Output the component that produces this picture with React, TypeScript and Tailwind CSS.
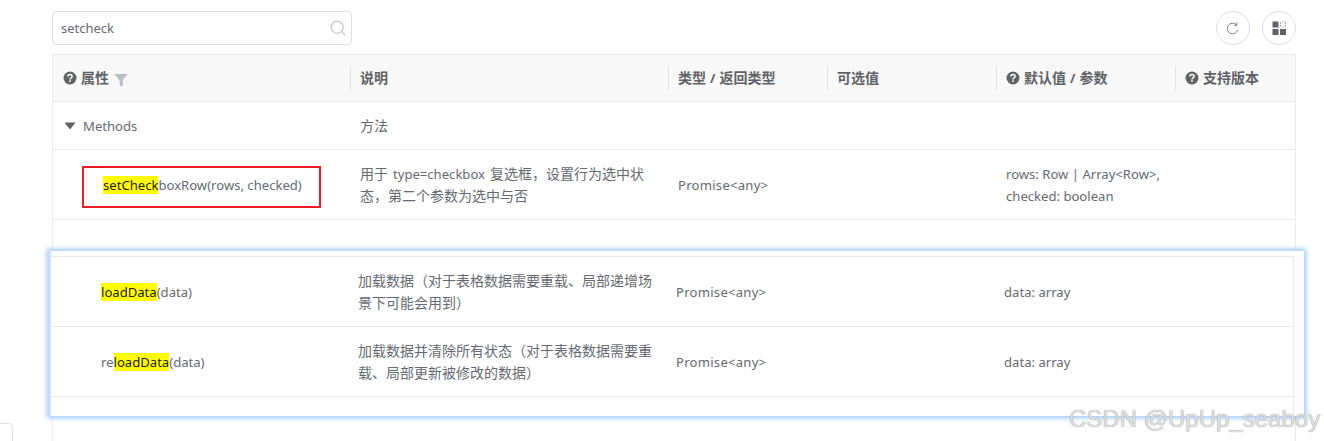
const font = { fontFamily: '"Noto Sans", "Noto Sans CJK SC", sans-serif' };

function Q() {
  return (
    <svg width="14" height="14" viewBox="0 0 14 14" className="shrink-0">
      <circle cx="7" cy="7" r="6.5" fill="#606266" />
      <path d="M4.9 5.5C4.9 4.3 5.8 3.5 7 3.5S9.1 4.3 9.1 5.4C9.1 6.9 7 6.9 7 8.4" fill="none" stroke="#fff" strokeWidth="1.5" />
      <rect x="6.2" y="9.3" width="1.6" height="1.6" fill="#fff" />
    </svg>
  );
}

const cols = "grid grid-cols-[298px_318px_159px_169px_179px_121px]";

function Zh({ children }: { children: React.ReactNode }) {
  return <span className="text-[14px]">{children}</span>;
}

function Head({ children }: { children: React.ReactNode }) {
  return (
    <div className="relative flex items-center gap-1 pl-[9px]">
      <span className="absolute left-[-1px] top-[11px] h-6 w-px bg-[#dfe1e6]" />
      {children}
    </div>
  );
}

function Hl({ children }: { children: React.ReactNode }) {
  return <span className="bg-[#ffff00] text-[#222]">{children}</span>;
}

function Row({ name, desc, type, param, height, pad }: { name: React.ReactNode; desc: React.ReactNode; type?: string; param?: React.ReactNode; height: string; pad: string }) {
  return (
    <div className={`${cols} ${height} items-center border-b border-[#e8eaec] text-[13.1px] leading-[22px] text-[#666a70]`}>
      <div className={pad}>{name}</div>
      <div className="pl-[9px] pr-3">{desc}</div>
      <div className="pl-[9px] tracking-[0.25px]">{type}</div>
      <div />
      <div className="pl-[9px]">{param}</div>
      <div />
    </div>
  );
}

export default function App() {
  return (
    <div className="relative h-[441px] w-[1324px] overflow-hidden bg-white" style={font}>
      <div className="flex h-[54px] items-start justify-between pl-[52px] pr-[28px] pt-[11px]">
        <div className="flex h-[34px] w-[300px] items-center justify-between rounded border border-[#dcdfe6] pl-2 pr-[5px] text-[13px] text-[#666a70]">
          <span className="pt-[2px]">setcheck</span>
          <svg width="16" height="16" viewBox="0 0 16 16" fill="none" stroke="#c0c4cc" strokeWidth="1.2">
            <circle cx="7.2" cy="7.2" r="6" />
            <path d="M11.6 11.6L15 15" />
          </svg>
        </div>
        <div className="flex gap-[12px]">
          <div className="flex h-[34px] w-[34px] items-center justify-center rounded-full border border-[#dcdfe6]">
            <svg width="13" height="13" viewBox="0 0 13 13" fill="none" stroke="#70747a" strokeWidth="0.9" className="-ml-[2px]">
              <path d="M10.6 3A5.3 5.3 0 1 0 11.7 8" />
              <path d="M8 3.2L10.9 3.3L11 .6" />
            </svg>
          </div>
          <div className="flex h-[34px] w-[34px] items-center justify-center rounded-full border border-[#dcdfe6]">
            <svg width="14" height="14" viewBox="0 0 14 14">
              <rect x="0.5" y="0.5" width="6" height="6" fill="#606266" />
              <rect x="8.5" y="1" width="5" height="5" fill="none" stroke="#909399" strokeWidth="1" strokeDasharray="1 1" />
              <rect x="0.5" y="8" width="6" height="6" fill="#606266" />
              <rect x="8" y="8" width="6" height="6" fill="#606266" />
            </svg>
          </div>
        </div>
      </div>

      <div className="ml-[52px] h-[387px] w-[1244px] border-x border-t border-[#e8eaec]">
        <div className={`${cols} h-[47px] border-b border-[#e8eaec] bg-[#f8f8f9] text-[13px] leading-[22px] font-bold text-[#606266]`}>
          <div className="flex items-center gap-1 pl-[10px]">
            <Q />
            <Zh>属性</Zh>
            <svg width="14" height="15" viewBox="0 0 14 14" className="ml-px mt-[2px]"><path d="M0.5 1.5H13.5L8.8 7.5V13.5H6.2L5.2 7.5Z" fill="#b9bec8" /></svg>
          </div>
          <Head><Zh>说明</Zh></Head>
          <Head><span><Zh>类型</Zh><span className="mx-1">/</span><Zh>返回类型</Zh></span></Head>
          <Head><Zh>可选值</Zh></Head>
          <Head><Q /><span><Zh>默认值</Zh><span className="mx-1">/</span><Zh>参数</Zh></span></Head>
          <Head><Q /><Zh>支持版本</Zh></Head>
        </div>
        <Row
          height="h-[48px]"
          pad="flex items-center gap-[7px] pl-[11px]"
          name={<><svg width="12" height="8" viewBox="0 0 12 8"><path d="M0.5 0.5H11.5L6 7.5Z" fill="#606266" /></svg><span>Methods</span></>}
          desc={<Zh>方法</Zh>}
        />
        <Row
          height="h-[70px]"
          pad="pl-[50px]"
          name={<><Hl>setCheck</Hl>boxRow(rows, checked)</>}
          desc={<><Zh>用于</Zh><span className="mx-[5px]">type=checkbox</span><Zh>复选框，设置行为选中状</Zh><br /><Zh>态，第二个参数为选中与否</Zh></>}
          type="Promise<any>"
          param={<>rows: Row | Array&lt;Row&gt;,<br />checked: boolean</>}
        />
      </div>

      {/* red annotation */}
      <div className="absolute left-[82px] top-[166px] h-[42px] w-[239px] border-2 border-[#ed1c24]" />

      {/* pasted screenshot panel */}
      <div className="absolute left-[49px] top-[251px] h-[165px] w-[1255px] border-l-2 border-[#cfe2fb] bg-white pt-[5px] pr-[10px] shadow-[0_0_5px_2px_#9cc6fb]">
        <div className="w-[1243px] border-r border-t border-[#e8eaec]">
          <Row
            height="h-[70px]"
            pad="pl-[50px]"
            name={<><Hl>loadData</Hl>(data)</>}
            desc={<Zh>加载数据（对于表格数据需要重载、局部递增场景下可能会用到）</Zh>}
            type="Promise<any>"
            param="data: array"
          />
          <Row
            height="h-[70px]"
            pad="pl-[50px]"
            name={<>re<Hl>loadData</Hl>(data)</>}
            desc={<Zh>加载数据并清除所有状态（对于表格数据需要重载、局部更新被修改的数据）</Zh>}
            type="Promise<any>"
            param="data: array"
          />
          <div className="h-[19px]" />
        </div>
      </div>

      {/* bottom-left sliver */}
      <div className="absolute left-[-10px] top-[423px] h-8 w-[23px] rounded border border-[#dcdfe6]" />

      {/* watermark */}
      <div
        className="absolute left-[1069px] top-[404px] whitespace-nowrap text-[24px] leading-[30px] text-[#dedede] [text-shadow:0_0_1px_#888]"
        style={{ fontFamily: '"Liberation Sans", sans-serif' }}
      >
        CSDN @UpUp_seaboy
      </div>
    </div>
  );
}
